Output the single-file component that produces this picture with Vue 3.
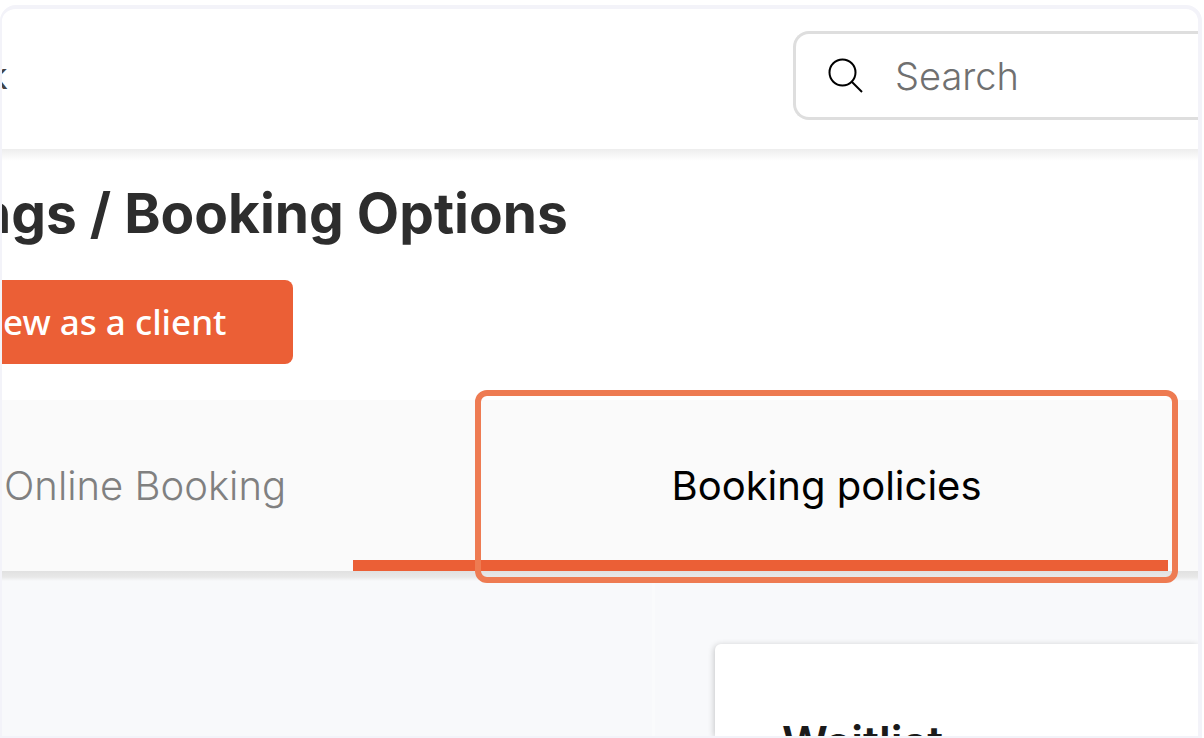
<script setup>
import { ref } from 'vue'

const query = ref('')
const active = ref('policies')
const tabs = [
  { id: 'online', label: 'Online Booking' },
  { id: 'policies', label: 'Booking policies' },
]
</script>

<template>
  <div class="page">
    <div class="frame">
      <header class="topbar">
        <span class="crumb">k</span>
        <label class="search">
          <svg class="search-icon" viewBox="0 0 36 36" aria-hidden="true">
            <circle cx="14.5" cy="14.5" r="13" />
            <path d="M23.5 23.5 L34 34" />
          </svg>
          <input v-model="query" type="text" placeholder="Search" aria-label="Search" />
        </label>
      </header>

      <section class="intro">
        <h1>ngs / Booking Options</h1>
        <button class="primary" type="button">ew as a client</button>
      </section>

      <nav class="tabs">
        <button
          v-for="tab in tabs"
          :key="tab.id"
          type="button"
          class="tab"
          :class="{ active: active === tab.id }"
          @click="active = tab.id"
        >{{ tab.label }}</button>
        <span class="highlight"></span>
      </nav>

      <main class="content">
        <aside class="side"></aside>
        <section class="card">
          <h2>Waitlist</h2>
        </section>
      </main>
    </div>
  </div>
</template>

<style>
body {
  margin: 0;
  background: #fff;
}
</style>

<style scoped>
.page {
  box-sizing: border-box;
  display: flex;
  height: 100vh;
  padding: 5px 2px 0 0;
  font-family: Inter, "Liberation Sans", sans-serif;
  color: #2d2d2d;
}

.frame {
  display: flex;
  flex: 1;
  flex-direction: column;
  min-width: 0;
  overflow: hidden;
  border: 4px solid #f3f3f9;
  border-width: 4px 4px 2px 2px;
  border-radius: 16px 16px 0 0;
  background: #fff;
}

.topbar {
  position: relative;
  display: flex;
  flex: none;
  align-items: flex-start;
  justify-content: space-between;
  box-sizing: border-box;
  height: 140px;
  padding-top: 22px;
}

.topbar::after,
.tabs::after {
  content: "";
  position: absolute;
  top: 100%;
  right: 0;
  left: 0;
  height: 12px;
  background: linear-gradient(#ededed, #fff);
}

.tabs::after {
  height: 10px;
  background: linear-gradient(#e1e1e1, #e8e8e8 60%, #f8f9fb);
}

.crumb {
  margin-left: -14px;
  font-size: 36px;
  line-height: 90px;
  color: #444;
}

.search {
  display: flex;
  align-items: center;
  box-sizing: border-box;
  width: 405px;
  height: 89px;
  padding-left: 32px;
  border: 3px solid #dedede;
  border-right: 0;
  border-radius: 16px 0 0 16px;
}

.search-icon {
  flex: none;
  width: 36px;
  height: 36px;
  fill: none;
  stroke: #000;
  stroke-width: 2;
}

.search input {
  flex: 1;
  min-width: 0;
  margin-left: 31px;
  padding: 0;
  border: 0;
  outline: 0;
  background: transparent;
  font: 300 38px Inter, "Liberation Sans", sans-serif;
  color: #2d2d2d;
}

.search input::placeholder {
  color: #707070;
  opacity: 1;
}

.intro {
  flex: none;
  padding: 32px 0 36px;
}

h1 {
  margin: 0 0 35px -25px;
  font-size: 55px;
  font-weight: 700;
  line-height: 64px;
  white-space: nowrap;
}

.primary {
  display: block;
  height: 84px;
  padding: 0 66px 0 1px;
  border: 0;
  border-radius: 0 8px 8px 0;
  background: #eb5f36;
  color: #fff;
  font: 500 35px/80px "Noto Sans", "Open Sans", sans-serif;
  white-space: nowrap;
}

.tabs {
  position: relative;
  display: flex;
  flex: none;
  height: 171px;
  padding-right: 30px;
  background: #fafafa;
}

.tab {
  flex: none;
  width: 351px;
  padding: 0 0 0 2px;
  border: 0;
  border-top: 11px solid transparent;
  border-bottom: 11px solid transparent;
  background: transparent;
  font: 300 40px Inter, "Liberation Sans", sans-serif;
  color: #808080;
  text-align: left;
  white-space: nowrap;
}

.tab.active {
  flex: 1;
  padding-left: 132px;
  border-bottom-color: #eb5f36;
  font-weight: 400;
  color: #000;
  text-align: center;
}

.highlight {
  position: absolute;
  z-index: 1;
  inset: -10px 20px -12px 473px;
  border: 6px solid #ee7b52;
  border-radius: 12px;
  pointer-events: none;
}

.content {
  display: flex;
  flex: 1;
  min-height: 0;
  background: #f8f9fb;
}

.side {
  flex: none;
  width: 650px;
  border-right: 3px solid #fafbfc;
}

.card {
  flex: 1;
  margin: 73px 0 0 60px;
  padding: 75px 67px 0;
  border-radius: 6px 0 0 0;
  background: #fff;
  box-shadow: -1px 1px 6px rgba(0, 0, 0, 0.2);
}

h2 {
  margin: 0;
  font-size: 45px;
  font-weight: 600;
  line-height: 48px;
  color: #1a1a1a;
}
</style>
